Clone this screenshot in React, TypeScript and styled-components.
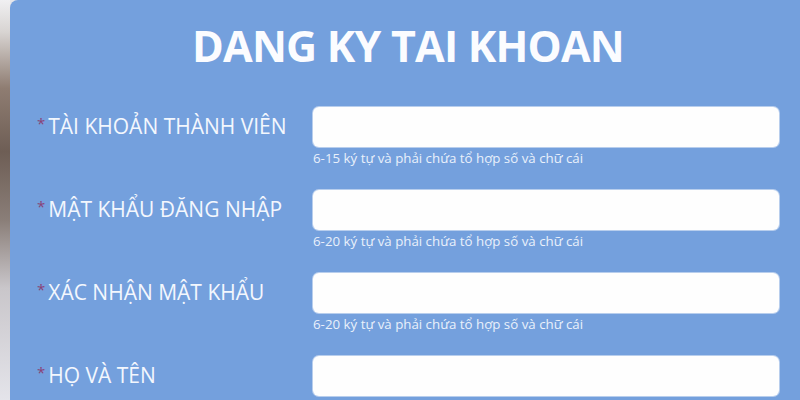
import React from "react";
import styled, { createGlobalStyle } from "styled-components";

const Global = createGlobalStyle`
  html, body { margin: 0; padding: 0; }
  body { width: 800px; height: 400px; overflow: hidden; background: #e6e6ea; font-family: "Open Sans", "Noto Sans", sans-serif; }
  #root { width: 800px; height: 400px; }
`;

const Page = styled.div`
  display: flex;
  width: 800px;
  height: 400px;
  overflow: hidden;
`;

const PhotoEdge = styled.div`
  width: 10px;
  flex: none;
  background: linear-gradient(
    to bottom,
    #f0f0f2 0%,
    #d8d4d2 8%,
    #8f7d72 22%,
    #6e5e55 38%,
    #8a7e78 55%,
    #c9c6ca 72%,
    #e4e4ea 100%
  );
`;

const Panel = styled.div`
  flex: 1;
  background: #74a0dd;
  border-top-left-radius: 8px;
  display: flex;
  flex-direction: column;
  padding: 24px 21px 0 27px;
`;

const Title = styled.h1`
  margin: 0;
  padding-left: 155px;
  font-family: "Open Sans", sans-serif;
  font-weight: 700;
  font-size: 43px;
  line-height: 43px;
  color: #fbfcff;
  letter-spacing: -0.8px;
  white-space: nowrap;
`;

const Form = styled.div`
  display: flex;
  flex-direction: column;
  gap: 23px;
  margin-top: 40px;
`;

const Field = styled.div`
  display: grid;
  grid-template-columns: 276px 1fr;
  grid-template-rows: 40px auto;
  row-gap: 3px;
`;

const Label = styled.label`
  display: flex;
  align-items: center;
  margin-top: -3px;
  font-family: "Open Sans", sans-serif;
  font-size: 21px;
  color: #f3f7fd;
  white-space: nowrap;
`;

const Star = styled.span`
  color: #8a4275;
  font-size: 15px;
  margin-right: 3px;
  position: relative;
  top: -3px;
`;

const Input = styled.input`
  box-sizing: border-box;
  width: 100%;
  height: 40px;
  border: none;
  border-radius: 6px;
  background: #fefefe;
  box-shadow: 0 0 0 1px rgba(230, 236, 248, 0.6);
  outline: none;
`;

const Hint = styled.div`
  grid-column: 2;
  font-family: "Open Sans", sans-serif;
  font-size: 13.3px;
  line-height: 17px;
  color: #e9f0fb;
  white-space: nowrap;
`;

const fields = [
  { label: "TÀI KHOẢN THÀNH VIÊN", hint: "6-15 ký tự và phải chứa tổ hợp số và chữ cái" },
  { label: "MẬT KHẨU ĐĂNG NHẬP", hint: "6-20 ký tự và phải chứa tổ hợp số và chữ cái" },
  { label: "XÁC NHẬN MẬT KHẨU", hint: "6-20 ký tự và phải chứa tổ hợp số và chữ cái" },
  { label: "HỌ VÀ TÊN", hint: "" },
];

export default function App() {
  return (
    <>
      <Global />
      <Page>
        <PhotoEdge />
        <Panel>
          <Title>DANG KY TAI KHOAN</Title>
          <Form>
            {fields.map((f) => (
              <Field key={f.label}>
                <Label>
                  <Star>*</Star>
                  {f.label}
                </Label>
                <Input type="text" />
                {f.hint && <Hint>{f.hint}</Hint>}
              </Field>
            ))}
          </Form>
        </Panel>
      </Page>
    </>
  );
}
